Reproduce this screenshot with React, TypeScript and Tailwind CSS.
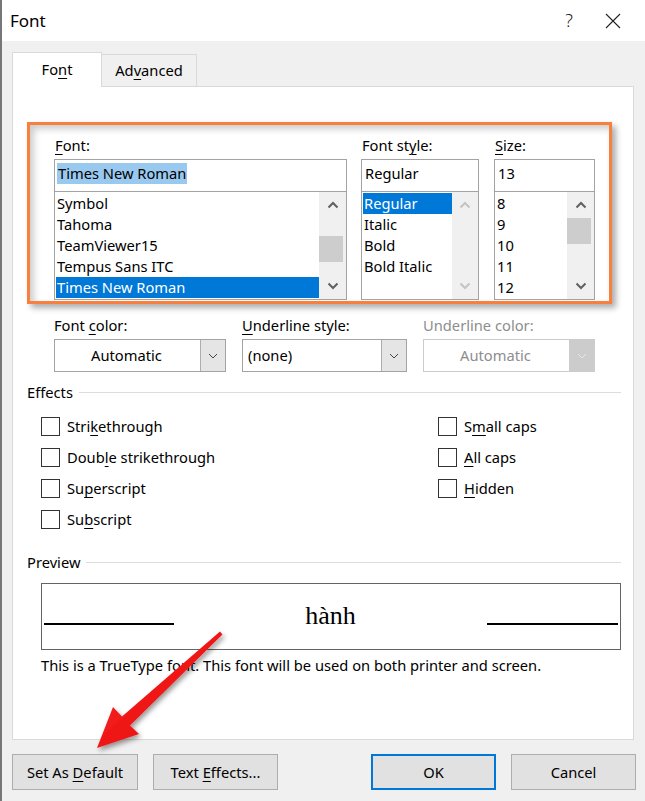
import type { ReactNode } from "react";

const fonts = ["Symbol", "Tahoma", "TeamViewer15", "Tempus Sans ITC", "Times New Roman"];
const styles = ["Regular", "Italic", "Bold", "Bold Italic"];
const sizes = ["8", "9", "10", "11", "12"];

function K({ children }: { children: ReactNode }) {
  return <u className="underline decoration-1 underline-offset-[3px]">{children}</u>;
}

function Chevron({ up, color }: { up?: boolean; color: string }) {
  return (
    <svg width="12" height="8" viewBox="0 0 12 8">
      <path
        d={up ? "M1.5 6.5 L6 2 L10.5 6.5" : "M1.5 1.5 L6 6 L10.5 1.5"}
        fill="none"
        stroke={color}
        strokeWidth="2"
      />
    </svg>
  );
}

function ScrollBar({ width, thumbOffset, disabled }: { width: string; thumbOffset?: string; disabled?: boolean }) {
  const c = disabled ? "#c4c4c4" : "#606060";
  return (
    <div className={`${width} flex h-full flex-col bg-[#f0f0f0]`}>
      <div className="flex h-[26px] items-center justify-center">
        <Chevron up color={c} />
      </div>
      <div className="flex-1">
        {thumbOffset ? <div className={`${thumbOffset} h-[26px] w-[24px] bg-[#cdcdcd]`} /> : null}
      </div>
      <div className="flex h-[26px] items-center justify-center">
        <Chevron color={c} />
      </div>
    </div>
  );
}

function ListColumn({
  label,
  value,
  items,
  selected,
  width,
  rowWidth,
  bar,
  highlightValue,
}: {
  label: ReactNode;
  value: string;
  items: string[];
  selected: string;
  width: string;
  rowWidth: string;
  bar: ReactNode;
  highlightValue?: boolean;
}) {
  return (
    <div className={width}>
      <div className="mb-[4px] h-[20px] leading-[20px] pl-[1px]">{label}</div>
      <div className="h-[33px] border border-[#a3a3a3] bg-white pl-[2px] pt-[2px]">
        <span className={`inline-block h-[21px] leading-[21px] pr-[1px] pl-[1px] ${highlightValue ? "bg-[#99c9ef]" : ""}`}>
          {value}
        </span>
      </div>
      <div className="flex h-[108px] border border-t-0 border-[#a3a3a3] bg-white">
        <div className={`${rowWidth} ml-[1px] pt-[1px]`}>
          {items.map((item) => (
            <div
              key={item}
              className={`h-[21px] pl-[1px] leading-[21px] ${item === selected ? "bg-[#0078d7] text-white" : ""}`}
            >
              {item}
            </div>
          ))}
        </div>
        {bar}
      </div>
    </div>
  );
}

function Dropdown({ value, width, center, disabled }: { value: string; width: string; center?: boolean; disabled?: boolean }) {
  return (
    <div
      className={`${width} flex h-[33px] border bg-white ${disabled ? "border-[#cccccc] text-[#8d8d8d]" : "border-[#a3a3a3]"}`}
    >
      <div className={`flex flex-1 items-center ${center ? "justify-center pr-[2px]" : "pl-[5px]"}`}>{value}</div>
      <div
        className={`flex w-[25px] items-center justify-center border-l ${
          disabled ? "border-[#cccccc] bg-[#cccccc]" : "border-[#adadad] bg-[#e5e5e5]"
        }`}
      >
        <svg width="10" height="6" viewBox="0 0 10 6">
          <path d="M1 1 L5 5 L9 1" fill="none" stroke={disabled ? "#e6e6e6" : "#444"} strokeWidth="1" />
        </svg>
      </div>
    </div>
  );
}

function Check({ children }: { children: ReactNode }) {
  return (
    <div className="flex h-[31px] items-center gap-[7px]">
      <div className="h-[19px] w-[19px] border border-[#333] bg-white" />
      <span>{children}</span>
    </div>
  );
}

function SectionTitle({ children, lineStart }: { children: ReactNode; lineStart: string }) {
  return (
    <div className="ml-[14px] mr-[12px] flex h-[20px] items-center">
      <span className="leading-[20px]">{children}</span>
      <div className={`${lineStart} h-px flex-1 bg-[#dcdcdc]`} />
    </div>
  );
}

function Button({ children, width, primary }: { children: ReactNode; width: string; primary?: boolean }) {
  return (
    <div
      className={`${width} flex h-[36px] items-center justify-center bg-[#e1e1e1] ${
        primary ? "border-2 border-[#0078d7]" : "border border-[#adadad]"
      }`}
    >
      <span>{children}</span>
    </div>
  );
}

export default function App() {
  return (
    <div className="relative h-[801px] w-[645px] overflow-hidden border-l-2 border-[#777] bg-[#f0f0f0] font-['Noto_Sans',sans-serif] text-[14.7px] text-black">
      {/* title bar */}
      <div className="flex h-[41px] items-center bg-white">
        <span className="pl-[8px] text-[17px]">Font</span>
        <span className="ml-auto text-[18px] font-light text-[#222]">?</span>
        <svg className="ml-[32px] mr-[24px]" width="16" height="16" viewBox="0 0 16 16">
          <path d="M1 1 L15 15 M15 1 L1 15" stroke="#222" strokeWidth="1.1" />
        </svg>
      </div>

      {/* tabs */}
      <div className="mt-[11px] flex pl-[10px]">
        <div className="relative z-10 -mb-px flex h-[35px] w-[90px] items-center justify-center border-x border-t border-[#d9d9d9] bg-white pb-[2px]">
          <span>Fo<K>n</K>t</span>
        </div>
        <div className="mt-[2px] flex h-[32px] w-[95px] items-center justify-center border-r border-t border-[#d9d9d9]">
          <span>Ad<K>v</K>anced</span>
        </div>
      </div>

      <div className="ml-[10px] h-[654px] w-[622px] border border-[#d9d9d9] bg-white">
        {/* font / style / size block */}
        <div className="ml-[14px] mt-[35px] h-[182px] w-[585px] border-[3px] border-[#f7803f] shadow-[4px_4px_6px_rgba(0,0,0,0.32),inset_4px_4px_7px_rgba(0,0,0,0.2)]">
          <div className="flex pl-[24px] pt-[10px]">
            <ListColumn
              label={<><K>F</K>ont:</>}
              value="Times New Roman"
              items={fonts}
              selected="Times New Roman"
              width="w-[293px]"
              rowWidth="w-[263px]"
              highlightValue
              bar={<ScrollBar width="w-[27px]" thumbOffset="mt-[18px]" />}
            />
            <div className="w-[14px]" />
            <ListColumn
              label={<>Font st<K>y</K>le:</>}
              value="Regular"
              items={styles}
              selected="Regular"
              width="w-[118px]"
              rowWidth="w-[89px]"
              bar={<ScrollBar width="w-[26px]" disabled />}
            />
            <div className="w-[15px]" />
            <ListColumn
              label={<><K>S</K>ize:</>}
              value="13"
              items={sizes}
              selected=""
              width="w-[101px]"
              rowWidth="w-[71px]"
              bar={<ScrollBar width="w-[27px]" thumbOffset="mt-0" />}
            />
          </div>
        </div>

        {/* colour / underline row */}
        <div className="ml-[41px] mt-[11px] flex gap-[16px]">
          <div>
            <div className="mb-[4px] h-[20px] leading-[20px]">Font <K>c</K>olor:</div>
            <Dropdown value="Automatic" width="w-[172px]" center />
          </div>
          <div>
            <div className="mb-[4px] h-[20px] leading-[20px]"><K>U</K>nderline style:</div>
            <Dropdown value="(none)" width="w-[165px]" />
          </div>
          <div>
            <div className="mb-[4px] h-[20px] leading-[20px] text-[#8d8d8d]">Underline color:</div>
            <Dropdown value="Automatic" width="w-[172px]" center disabled />
          </div>
        </div>

        {/* effects */}
        <div className="mt-[10px]">
          <SectionTitle lineStart="ml-[6px]">Effects</SectionTitle>
        </div>
        <div className="ml-[28px] mt-[9px] flex">
          <div className="w-[397px]">
            <Check>Stri<K>k</K>ethrough</Check>
            <Check>Doub<K>l</K>e strikethrough</Check>
            <Check>Su<K>p</K>erscript</Check>
            <Check>Su<K>b</K>script</Check>
          </div>
          <div>
            <Check>S<K>m</K>all caps</Check>
            <Check><K>A</K>ll caps</Check>
            <Check><K>H</K>idden</Check>
          </div>
        </div>

        {/* preview */}
        <div className="mt-[17px]">
          <SectionTitle lineStart="ml-[6px]">Preview</SectionTitle>
        </div>
        <div className="ml-[28px] mt-[11px] h-[67px] w-[580px] border border-[#646464]">
          <div className="flex h-full items-end justify-between px-[2px] pb-[24px]">
            <div className="h-[2px] w-[130px] bg-black" />
            <span className="-mb-[4px] font-['Liberation_Serif',serif] text-[26px] leading-[26px]">hành</span>
            <div className="h-[2px] w-[131px] bg-black" />
          </div>
        </div>
        <div className="ml-[28px] mt-[5px] h-[20px] leading-[20px]">
          This is a TrueType font. This font will be used on both printer and screen.
        </div>
      </div>

      {/* dialog buttons */}
      <div className="mt-[14px] flex pl-[10px]">
        <Button width="w-[126px]">Set As <K>D</K>efault</Button>
        <div className="w-[15px]" />
        <Button width="w-[125px]">Text <K>E</K>ffects...</Button>
        <div className="w-[93px]" />
        <Button width="w-[125px]" primary>OK</Button>
        <div className="w-[15px]" />
        <Button width="w-[125px]">Cancel</Button>
      </div>

      {/* red pointer arrow */}
      <svg className="pointer-events-none absolute left-[-2px] top-0" width="645" height="801" viewBox="0 0 645 801">
        <defs>
          <linearGradient id="arrowFill" x1="0" y1="0" x2="1" y2="1">
            <stop offset="0" stopColor="#ff3030" />
            <stop offset="1" stopColor="#e00000" />
          </linearGradient>
          <filter id="arrowShadow" x="-20%" y="-20%" width="140%" height="140%">
            <feDropShadow dx="2" dy="3" stdDeviation="2.5" floodColor="#000" floodOpacity="0.4" />
          </filter>
        </defs>
        <polygon
          points="220,631.5 122,716.5 113,707 97,748 139,734 130,725.5 222.5,634.5"
          fill="url(#arrowFill)"
          filter="url(#arrowShadow)"
        />
      </svg>
    </div>
  );
}
